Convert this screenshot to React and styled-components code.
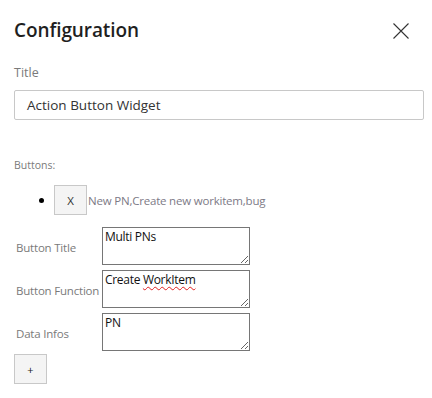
import React from 'react';
import styled, { createGlobalStyle } from 'styled-components';

const GlobalStyle = createGlobalStyle`
  body {
    margin: 0;
    background: #ffffff;
    font-family: "Open Sans", "Noto Sans", sans-serif;
  }
`;

const Panel = styled.div`
  width: 432px;
  height: 398px;
  box-sizing: border-box;
  padding: 14px 20px 0 14px;
  display: flex;
  flex-direction: column;
`;

const Header = styled.div`
  display: flex;
  align-items: center;
  justify-content: space-between;
  height: 32px;
`;

const Heading = styled.h1`
  margin: 0;
  font-size: 19px;
  font-weight: 600;
  color: #1f1f1f;
  letter-spacing: -0.1px;
`;

const Close = styled.button`
  border: none;
  background: none;
  padding: 0;
  width: 16px;
  height: 16px;
  margin-right: 3px;
  margin-top: 1px;
  display: flex;
  cursor: pointer;
`;

const Label = styled.div`
  font-size: 12.5px;
  color: #7a7a7a;
  margin-top: 18px;
`;

const TitleInput = styled.div`
  margin-top: 9px;
  height: 28px;
  border: 1px solid #c8c8c8;
  border-radius: 2px;
  box-sizing: content-box;
  width: 396px;
  display: flex;
  align-items: center;
  padding-left: 12px;
  font-size: 13.5px;
  color: #333;
`;

const SmallLabel = styled.div`
  font-size: 10.5px;
  color: #7a7a7a;
  margin-top: 38px;
`;

const List = styled.ul`
  margin: 13px 0 0;
  padding-left: 40px;
`;

const Item = styled.li`
  display: flex;
  align-items: center;
  position: relative;
  &::before {
    content: '';
    position: absolute;
    left: -15px;
    top: 13px;
    width: 5px;
    height: 5px;
    border-radius: 50%;
    background: #000;
  }
`;

const SmallButton = styled.button`
  width: 33px;
  height: 30px;
  box-sizing: border-box;
  border: 1px solid #c8c8c8;
  background: #f4f4f4;
  font-family: inherit;
  font-size: 11.5px;
  color: #333;
  padding: 0;
  cursor: pointer;
  display: flex;
  align-items: center;
  justify-content: center;
`;

const ItemText = styled.span`
  font-size: 11.5px;
  color: #7d7a86;
  margin-left: 1px;
  letter-spacing: -0.2px;
`;

const Rows = styled.div`
  margin-top: 12px;
  display: flex;
  flex-direction: column;
  gap: 5px;
`;

const Row = styled.div`
  display: flex;
  align-items: center;
`;

const RowLabel = styled.div`
  width: 86px;
  padding-left: 2px;
  padding-top: 2px;
  font-size: 11.5px;
  color: #7a7a7a;
  white-space: nowrap;
  letter-spacing: -0.2px;
`;

const Field = styled.div`
  width: 142px;
  height: 36px;
  border: 1px solid #767676;
  padding: 0 2px;
  font-size: 12px;
  color: #111;
  line-height: 18px;
  resize: both;
  overflow: auto;
  letter-spacing: -0.3px;
`;

const Misspelled = styled.span`
  text-decoration: underline wavy #e02020;
  text-decoration-thickness: 1px;
  text-underline-offset: 2px;
`;

const AddButton = styled(SmallButton)`
  margin-top: 3px;
  font-size: 11px;
  color: #222;
`;

const rows = [
  { label: 'Button Title', value: 'Multi PNs' },
  { label: 'Button Function', value: 'Create', wrong: 'WorkItem' },
  { label: 'Data Infos', value: 'PN' },
];

export default function App() {
  return (
    <>
      <GlobalStyle />
      <Panel>
        <Header>
          <Heading>Configuration</Heading>
          <Close aria-label="Close">
            <svg width="16" height="16" viewBox="0 0 16 16">
              <path d="M0.5 0.5L15.5 15.5M15.5 0.5L0.5 15.5" stroke="#333" strokeWidth="1.1" fill="none" />
            </svg>
          </Close>
        </Header>
        <Label>Title</Label>
        <TitleInput>Action Button Widget</TitleInput>
        <SmallLabel>Buttons:</SmallLabel>
        <List>
          <Item>
            <SmallButton>X</SmallButton>
            <ItemText>New PN,Create new workitem,bug</ItemText>
          </Item>
        </List>
        <Rows>
          {rows.map((r) => (
            <Row key={r.label}>
              <RowLabel>{r.label}</RowLabel>
              <Field>
                {r.value}
                {r.wrong && <> <Misspelled>{r.wrong}</Misspelled></>}
              </Field>
            </Row>
          ))}
        </Rows>
        <AddButton>+</AddButton>
      </Panel>
    </>
  );
}
